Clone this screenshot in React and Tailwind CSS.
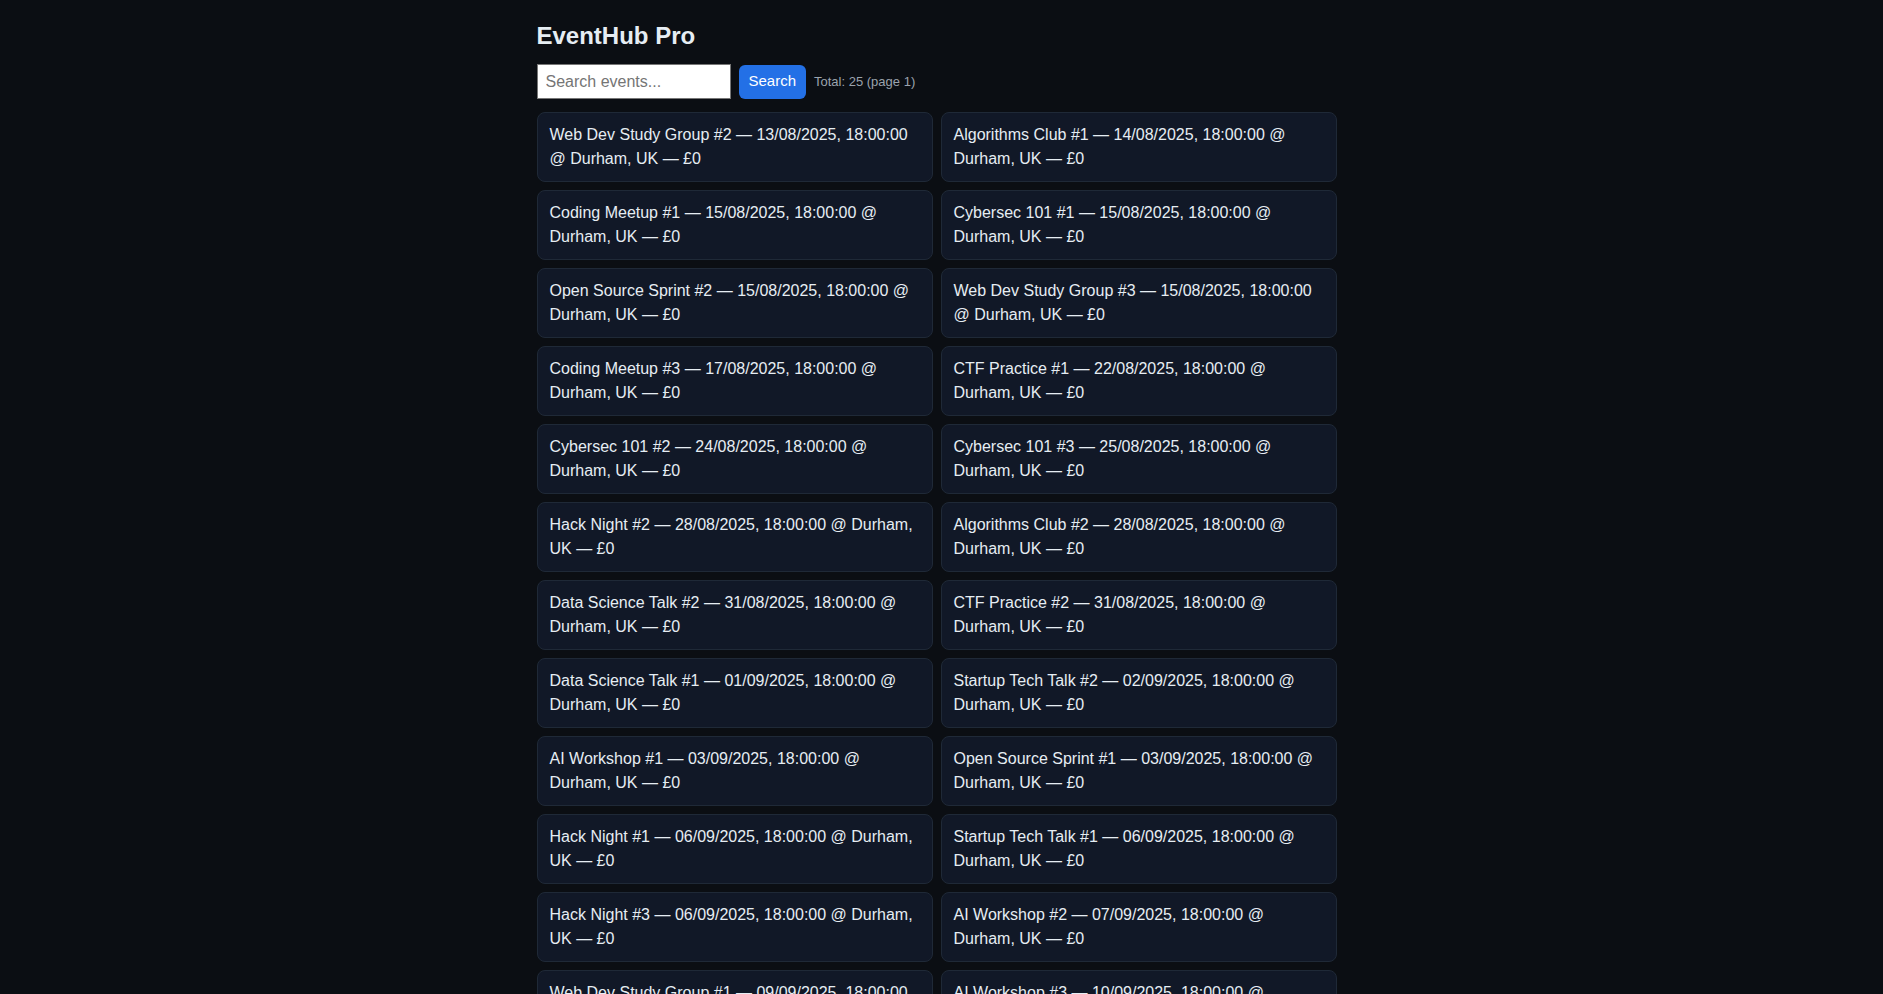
import React from "react";

const EVENTS = [
  ["Web Dev Study Group #2", "13/08/2025"],
  ["Algorithms Club #1", "14/08/2025"],
  ["Coding Meetup #1", "15/08/2025"],
  ["Cybersec 101 #1", "15/08/2025"],
  ["Open Source Sprint #2", "15/08/2025"],
  ["Web Dev Study Group #3", "15/08/2025"],
  ["Coding Meetup #3", "17/08/2025"],
  ["CTF Practice #1", "22/08/2025"],
  ["Cybersec 101 #2", "24/08/2025"],
  ["Cybersec 101 #3", "25/08/2025"],
  ["Hack Night #2", "28/08/2025"],
  ["Algorithms Club #2", "28/08/2025"],
  ["Data Science Talk #2", "31/08/2025"],
  ["CTF Practice #2", "31/08/2025"],
  ["Data Science Talk #1", "01/09/2025"],
  ["Startup Tech Talk #2", "02/09/2025"],
  ["AI Workshop #1", "03/09/2025"],
  ["Open Source Sprint #1", "03/09/2025"],
  ["Hack Night #1", "06/09/2025"],
  ["Startup Tech Talk #1", "06/09/2025"],
  ["Hack Night #3", "06/09/2025"],
  ["AI Workshop #2", "07/09/2025"],
  ["Web Dev Study Group #1", "09/09/2025"],
  ["AI Workshop #3", "10/09/2025"],
  ["Coding Meetup #2", "12/09/2025"],
];

export default function App() {
  return (
    <div className="min-h-screen bg-[#0b0e13] text-[#e6edf3] font-['Segoe_UI','Liberation_Sans',sans-serif] pr-[10px]">
      <div className="mx-auto max-w-[800px] pt-[20px] pb-6">
        <h1 className="text-2xl font-bold leading-8 mb-[12px]">EventHub Pro</h1>

        <div className="flex items-center gap-2 mb-[13px]">
          <input
            type="text"
            placeholder="Search events..."
            className="w-[194px] h-[35px] px-2 bg-white text-black border border-[#767676] font-['Liberation_Sans',Arial,sans-serif] text-base placeholder:text-[#757575] outline-none"
          />
          <button className="h-[34px] px-[10px] rounded-md bg-[#2370e6] text-white font-['Liberation_Sans',Arial,sans-serif] text-[15px]">
            Search
          </button>
          <span className="text-[13px] text-[#9ba3ad]">Total: 25 (page 1)</span>
        </div>

        <div className="grid grid-cols-2 gap-2">
          {EVENTS.map(([name, date]) => (
            <div
              key={name}
              className="rounded-lg border border-[#1f2937] bg-[#111827] px-3 py-2.5 text-base leading-6"
            >
              {name} — {date}, 18:00:00 @ Durham, UK — £0
            </div>
          ))}
        </div>
      </div>
    </div>
  );
}
